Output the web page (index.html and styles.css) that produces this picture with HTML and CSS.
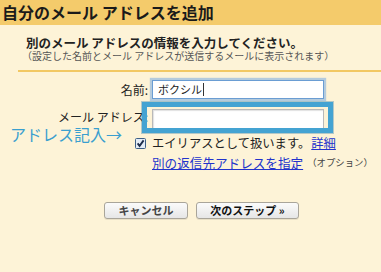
FILE: index.html
```html
<!DOCTYPE html>
<html lang="ja">
<head>
<meta charset="utf-8">
<title>自分のメール アドレスを追加</title>
<link rel="stylesheet" href="styles.css">
</head>
<body>
<header class="title">自分のメール アドレスを追加</header>
<section class="intro">
  <h2 class="intro-head">別のメール アドレスの情報を入力してください。</h2>
  <p class="intro-note">（設定した名前とメール アドレスが送信するメールに表示されます）</p>
</section>
<div class="rule"></div>
<form class="form">
  <div class="row row-name">
    <label class="lbl">名前:</label>
    <div class="field focused"><span class="val">ボクシル</span><span class="caret"></span></div>
  </div>
  <div class="row row-mail">
    <label class="lbl">メール アドレス:</label>
    <div class="field-wrap">
      <div class="field"></div>
      <div class="highlight"></div>
    </div>
  </div>
  <div class="opt opt-alias">
    <span class="cb"><svg width="11" height="11" viewBox="0 0 11 11"><rect x="0.5" y="0.5" width="10" height="10" rx="1" fill="#e4ecf6" stroke="#3d5f86"/><path d="M2.6 5.4 L4.6 7.9 L8.6 2.4" fill="none" stroke="#1c2c4a" stroke-width="1.8"/></svg></span>
    <span class="opt-text">エイリアスとして扱います。</span><a class="link" href="#">詳細</a>
  </div>
  <div class="opt opt-reply">
    <a class="link" href="#">別の返信先アドレスを指定</a><span class="small">（オプション）</span>
  </div>
  <div class="buttons">
    <button type="button" class="btn btn-cancel">キャンセル</button>
    <button type="button" class="btn btn-next">次のステップ »</button>
  </div>
</form>
<div class="annot">アドレス記入→</div>
</body>
</html>
```
FILE: styles.css
```css
html, body {
  margin: 0;
  padding: 0;
}
body {
  position: relative;
  width: 381px;
  height: 272px;
  overflow: hidden;
  background: #fdf3d7;
  font-family: "Noto Sans CJK JP", "Noto Sans", sans-serif;
  color: #222;
}
.title {
  height: 25px;
  line-height: 25px;
  padding-left: 2px;
  background: #f4cb6b;
  font-size: 16px;
  font-weight: bold;
  color: #1a1a1a;
  white-space: nowrap;
}
.intro {
  padding-left: 26px;
}
.intro-head {
  margin: 11px 0 0 0;
  font-size: 12.5px;
  line-height: 13px;
  font-weight: bold;
  color: #222;
  white-space: nowrap;
}
.intro-note {
  margin: 1px 0 0 -4px;
  font-size: 10px;
  line-height: 11px;
  color: #555;
  white-space: nowrap;
}
.rule {
  margin: 9px 0 0 18px;
  height: 2px;
  background: #f2c863;
}
.form {
  margin: 0;
}
.row {
  display: flex;
  align-items: center;
  gap: 4px;
}
.row-name {
  margin-top: 8px;
  height: 19px;
}
.row-mail {
  margin-top: 10px;
  height: 20px;
}
.lbl {
  width: 148px;
  text-align: right;
  font-size: 12px;
  line-height: 12px;
  color: #222;
  white-space: nowrap;
}
.row-mail .lbl {
  margin-top: -4px;
}
.field {
  box-sizing: border-box;
  width: 172px;
  height: 20px;
  background: #fff;
  border: 1px solid #b9b9b9;
  box-shadow: inset 1px 1px 1px rgba(0,0,0,0.12);
  display: flex;
  align-items: center;
  padding-left: 5px;
}
.field.focused {
  height: 19px;
  border-color: #6a9dd3;
  box-shadow: 0 0 1px 2px rgba(120,170,225,0.55);
}
.val {
  font-size: 11px;
  line-height: 13px;
  color: #222;
}
.caret {
  width: 1px;
  height: 13px;
  background: #333;
  margin-left: 1px;
}
.field-wrap {
  position: relative;
}
.highlight {
  position: absolute;
  top: -7px;
  left: -10px;
  right: -9px;
  bottom: -4px;
  border: 5px solid #44a3d2;
  box-shadow: 0 0 0 1px rgba(40,120,170,0.35);
}
.opt {
  display: flex;
  align-items: center;
  height: 16px;
  white-space: nowrap;
}
.opt-alias {
  margin-top: 6px;
  padding-left: 135px;
  font-size: 12.3px;
}
.opt-reply {
  margin-top: 3px;
  padding-left: 152px;
  font-size: 12.6px;
}
.cb {
  display: flex;
  width: 11px;
  height: 11px;
  margin-right: 6px;
}
.opt-text {
  color: #222;
}
.link {
  color: #2233cc;
  text-decoration: underline;
  margin-left: 1px;
}
.opt-reply .link {
  margin-left: 0;
}
.small {
  font-size: 9.4px;
  color: #444;
  margin-left: 4px;
}
.buttons {
  display: flex;
  gap: 8px;
  margin-top: 32px;
  padding-left: 104px;
}
.btn {
  box-sizing: border-box;
  height: 17px;
  padding: 0;
  border: 1px solid #a9a59a;
  border-radius: 3px;
  background: linear-gradient(#fbfbfb, #e6e6e6);
  font-family: "Noto Sans CJK JP", "Noto Sans", sans-serif;
  font-size: 11px;
  line-height: 15px;
  font-weight: bold;
  color: #333;
  box-shadow: 0 1px 0 rgba(0,0,0,0.08);
}
.btn-cancel {
  width: 84px;
  font-weight: 600;
  color: #444;
}
.btn-next {
  width: 103px;
  color: #111;
}
.annot {
  position: absolute;
  left: 10px;
  top: 126px;
  font-size: 16px;
  line-height: 16px;
  color: #3a9fcf;
  white-space: nowrap;
}
```
